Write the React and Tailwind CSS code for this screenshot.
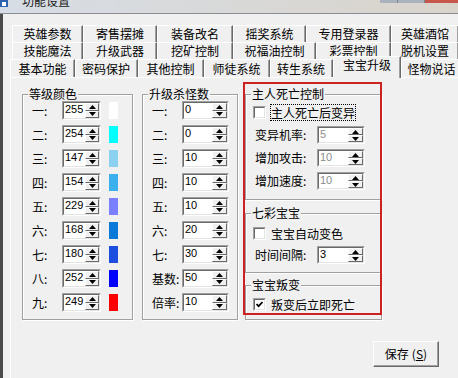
import React from 'react';

const Up = () => (
  <svg width="7" height="4" viewBox="0 0 7 4"><polygon points="0,4 3.5,0 7,4" fill="#000" /></svg>
);
const Down = () => (
  <svg width="7" height="4" viewBox="0 0 7 4"><polygon points="0,0 3.5,4 7,0" fill="#000" /></svg>
);

function Spin({ value, w, bw, h, disabled }) {
  return (
    <div className={`${w} ${h} shrink-0 flex border border-t-[#a0a0a0] border-l-[#a0a0a0] border-b-white border-r-white`}>
      <div className="flex-1 flex border border-t-[#696969] border-l-[#696969] border-b-[#e3e3e3] border-r-[#e3e3e3] bg-white">
        <div className={`flex-1 pl-[1px] text-[11px] leading-[13px] font-['Liberation_Sans',sans-serif] ${disabled ? 'text-[#8c8c8c]' : 'text-black'}`}>{value}</div>
        <div className={`${bw} flex flex-col`}>
          <div className="flex-1 flex items-center justify-center bg-[#f0f0f0] border border-t-white border-l-white border-b-[#696969] border-r-[#696969]"><Up /></div>
          <div className="flex-1 flex items-center justify-center bg-[#f0f0f0] border border-t-white border-l-white border-b-[#696969] border-r-[#696969]"><Down /></div>
        </div>
      </div>
    </div>
  );
}

function Check({ checked }) {
  return (
    <div className="w-[13px] h-[13px] shrink-0 border border-t-[#a0a0a0] border-l-[#a0a0a0] border-b-white border-r-white">
      <div className="w-full h-full bg-white border border-t-[#696969] border-l-[#696969] border-b-[#e3e3e3] border-r-[#e3e3e3] flex items-center justify-center">
        {checked && (
          <svg width="7" height="7" viewBox="0 0 7 7"><polyline points="0.5,3 2.6,5.2 6.5,1" fill="none" stroke="#000" strokeWidth="1.7" /></svg>
        )}
      </div>
    </div>
  );
}

function Group({ title, className, children }) {
  return (
    <fieldset className={`border border-[#a0a0a0] shadow-[inset_1px_1px_0_#fff,1px_1px_0_#fff] ${className}`}>
      <legend className="ml-[5px] px-[1px] bg-[#f0f0f0] text-[12px] leading-[12px]">{title}</legend>
      {children}
    </fieldset>
  );
}

function Tab({ w, children }) {
  return (
    <div className={`${w} h-[17px] shrink-0 flex items-center justify-center text-[12px] leading-[12px] border-t border-l border-r border-t-white border-l-white border-r-[#696969] shadow-[inset_-1px_0_0_#a0a0a0]`}>
      {children}
    </div>
  );
}

const colors = [
  ['一', '255', 'bg-[#ffffff]'],
  ['二', '254', 'bg-[#00ffff]'],
  ['三', '147', 'bg-[#8ad2f0]'],
  ['四', '154', 'bg-[#3cb0ec]'],
  ['五', '229', 'bg-[#7a80ff]'],
  ['六', '168', 'bg-[#0a7ad8]'],
  ['七', '180', 'bg-[#1c4ee0]'],
  ['八', '252', 'bg-[#0000ff]'],
  ['九', '249', 'bg-[#ff0000]'],
];

const kills = [
  ['一', '0'],
  ['二', '0'],
  ['三', '10'],
  ['四', '10'],
  ['五', '10'],
  ['六', '20'],
  ['七', '30'],
  ['基数', '50'],
  ['倍率', '10'],
];

export default function App() {
  return (
    <div className="w-[458px] h-[378px] overflow-hidden relative bg-[#f0f0f0] flex flex-col text-black font-['Noto_Sans_CJK_SC','Liberation_Sans',sans-serif]">
      {/* title bar */}
      <div className="h-[13px] shrink-0 flex bg-gradient-to-r from-[#d7dde5] to-[#d9d4cb] overflow-hidden">
        <div className="w-[8px] h-[8px] -mt-[1px] bg-[#2f63b0] flex items-end justify-center">
          <div className="w-[4px] h-[4px] bg-white mb-[1px]" />
        </div>
        <span className="ml-[14px] -mt-[5px] text-[12px] leading-[12px] text-[#1a1a1a]">功能设置</span>
        <div className="ml-auto flex h-[3px]">
          <div className="w-[18px] bg-[#a9b2bd] border-r border-[#7d8590]" />
          <div className="w-[27px] bg-[#a9b2bd] border-r border-[#7d8590]" />
          <div className="w-[33px] bg-[#c8574b]" />
        </div>
      </div>
      <div className="h-[1px] shrink-0 bg-[#8a8e94]" />

      <div className="flex-1 flex min-h-0">
        <div className="w-[3px] shrink-0 bg-[#4a4a4a]" />
        <div className="flex-1 flex flex-col pt-[11px] min-w-0">
          {/* tab row 1 */}
          <div className="flex ml-[9px]">
            <Tab w="w-[71px]">英雄参数</Tab>
            <Tab w="w-[74px]">寄售摆摊</Tab>
            <Tab w="w-[76px]">装备改名</Tab>
            <Tab w="w-[73px]">摇奖系统</Tab>
            <Tab w="w-[85px]">专用登录器</Tab>
            <Tab w="w-[68px]">英雄酒馆</Tab>
          </div>
          {/* tab row 2 */}
          <div className="flex ml-[9px]">
            <Tab w="w-[71px]">技能魔法</Tab>
            <Tab w="w-[74px]">升级武器</Tab>
            <Tab w="w-[76px]">挖矿控制</Tab>
            <Tab w="w-[83px]">祝福油控制</Tab>
            <Tab w="w-[75px]">彩票控制</Tab>
            <Tab w="w-[68px]">脱机设置</Tab>
          </div>
          {/* tab row 3 */}
          <div className="flex items-end h-[18px] ml-[7px]">
            <div className="w-[65px] h-[18px] shrink-0 flex items-center justify-center text-[12px] leading-[12px] border-t border-l border-r border-t-white border-l-white border-r-[#696969] shadow-[inset_-1px_0_0_#a0a0a0]">基本功能</div>
            <div className="w-[63px] h-[18px] shrink-0 flex items-center justify-center text-[12px] leading-[12px] border-t border-r border-t-white border-r-[#696969] shadow-[inset_-1px_0_0_#a0a0a0,inset_1px_0_0_#fff]">密码保护</div>
            <div className="w-[66px] h-[18px] shrink-0 flex items-center justify-center text-[12px] leading-[12px] border-t border-r border-t-white border-r-[#696969] shadow-[inset_-1px_0_0_#a0a0a0,inset_1px_0_0_#fff]">其他控制</div>
            <div className="w-[66px] h-[18px] shrink-0 flex items-center justify-center text-[12px] leading-[12px] border-t border-r border-t-white border-r-[#696969] shadow-[inset_-1px_0_0_#a0a0a0,inset_1px_0_0_#fff]">师徒系统</div>
            <div className="w-[63px] h-[18px] shrink-0 flex items-center justify-center text-[12px] leading-[12px] border-t border-r border-t-white border-r-[#696969] shadow-[inset_-1px_0_0_#a0a0a0,inset_1px_0_0_#fff]">转生系统</div>
            <div className="relative w-[68px] h-[22px] mb-[-1px] shrink-0 flex justify-center pt-[2px] bg-[#f0f0f0] text-[12px] leading-[12px] border-t border-l border-r border-t-white border-l-white border-r-[#696969] shadow-[inset_-1px_0_0_#a0a0a0]">宝宝升级</div>
            <div className="w-[62px] h-[18px] shrink-0 flex items-center justify-center text-[12px] leading-[12px] border-t border-r border-t-white border-r-[#696969] shadow-[inset_1px_0_0_#fff]">怪物说话</div>
          </div>

          {/* panel */}
          <div className="ml-[7px] flex-1 flex flex-col border-t border-l border-white pl-[11px] pt-[10px]">
            <div className="flex items-start">
              <Group title="等级颜色" className="w-[111px]">
                <div className="flex flex-col gap-[5px] pt-[1px] pb-[7px] pl-[9px]">
                  {colors.map(([l, v, c]) => (
                    <div key={l} className="flex items-center h-[19px]">
                      <span className="w-[30px] shrink-0 text-[12px] leading-[12px]">{l}:</span>
                      <Spin value={v} w="w-[39px]" bw="w-[14px]" h="h-[19px]" />
                      <div className={`ml-[8px] w-[9px] h-[17px] shrink-0 ${c}`} />
                    </div>
                  ))}
                </div>
              </Group>

              <Group title="升级杀怪数" className="w-[96px] ml-[9px]">
                <div className="flex flex-col gap-[5px] pt-[1px] pb-[7px] pl-[9px]">
                  {kills.map(([l, v]) => (
                    <div key={l} className="flex items-center h-[19px]">
                      <span className="w-[30px] shrink-0 text-[12px] leading-[12px] whitespace-nowrap">{l}:</span>
                      <Spin value={v} w="w-[47px]" bw="w-[15px]" h="h-[19px]" />
                    </div>
                  ))}
                </div>
              </Group>

              <div className="w-[137px] ml-[7px] flex flex-col">
                <Group title="主人死亡控制" className="w-[137px]">
                  <div className="flex flex-col pt-[4px] pb-[9px]">
                    <div className="flex items-center h-[17px] pl-[7px]">
                      <Check />
                      <span className="ml-[4px] h-[17px] border border-dotted border-black text-[12px] leading-[15px] whitespace-nowrap">主人死亡后变异</span>
                    </div>
                    <div className="flex flex-col gap-[5px] mt-[5px] pl-[9px]">
                      {[['变异机率', '5'], ['增加攻击', '10'], ['增加速度', '10']].map(([l, v]) => (
                        <div key={l} className="flex items-center h-[18px]">
                          <span className="w-[62px] shrink-0 text-[12px] leading-[12px] whitespace-nowrap">{l}:</span>
                          <Spin value={v} w="w-[48px]" bw="w-[15px]" h="h-[18px]" disabled />
                        </div>
                      ))}
                    </div>
                  </div>
                </Group>

                <Group title="七彩宝宝" className="w-[137px] mt-[7px]">
                  <div className="flex flex-col pt-[6px] pb-[8px]">
                    <div className="flex items-center h-[17px] pl-[7px]">
                      <Check />
                      <span className="ml-[4px] h-[17px] border border-transparent text-[12px] leading-[15px] whitespace-nowrap">宝宝自动变色</span>
                    </div>
                    <div className="flex items-center h-[18px] mt-[4px] pl-[9px]">
                      <span className="w-[62px] shrink-0 text-[12px] leading-[12px] whitespace-nowrap">时间间隔:</span>
                      <Spin value="3" w="w-[48px]" bw="w-[15px]" h="h-[18px]" />
                    </div>
                  </div>
                </Group>

                <Group title="宝宝叛变" className="w-[137px] mt-[6px]">
                  <div className="flex flex-col pt-[5px] pb-[6px]">
                    <div className="flex items-center h-[17px] pl-[7px]">
                      <Check checked />
                      <span className="ml-[4px] h-[17px] border border-transparent text-[12px] leading-[15px] whitespace-nowrap">叛变后立即死亡</span>
                    </div>
                  </div>
                </Group>
              </div>
            </div>

            <button className="self-end mr-[19px] mt-[21px] w-[66px] h-[26px] bg-[#f0f0f0] border border-t-white border-l-white border-b-[#696969] border-r-[#696969] shadow-[inset_-1px_-1px_0_#a0a0a0] text-[12px] leading-[12px] flex items-center justify-center">
              <span>保存</span>
              <span className="ml-[3px]">(<u>S</u>)</span>
            </button>
          </div>
        </div>
      </div>

      {/* red annotation frame */}
      <div className="absolute left-[243px] top-[82px] w-[139px] h-[233px] border-2 border-[#cc2222] pointer-events-none" />
    </div>
  );
}
